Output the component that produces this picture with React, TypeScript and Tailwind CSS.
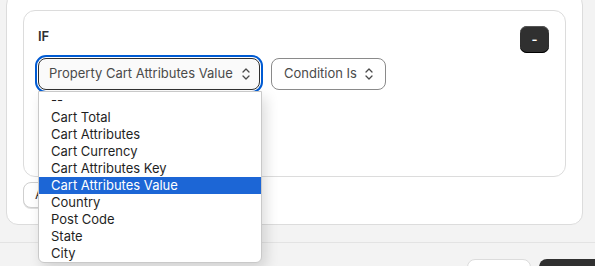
import React from 'react';

const options = [
  '--',
  'Cart Total',
  'Cart Attributes',
  'Cart Currency',
  'Cart Attributes Key',
  'Cart Attributes Value',
  'Country',
  'Post Code',
  'State',
  'City',
];

function UpDown() {
  return (
    <svg width="10" height="14" viewBox="0 0 10 14" fill="none" className="shrink-0">
      <path d="M2 5 L5 2 L8 5" stroke="#4a4a4a" strokeWidth="1.3" strokeLinecap="round" strokeLinejoin="round" />
      <path d="M2 9 L5 12 L8 9" stroke="#4a4a4a" strokeWidth="1.3" strokeLinecap="round" strokeLinejoin="round" />
    </svg>
  );
}

export default function App() {
  const selected = 'Cart Attributes Value';

  return (
    <div
      className="relative w-[595px] h-[266px] overflow-hidden bg-[#f3f3f3] text-[13px] text-[#303030]"
      style={{ fontFamily: 'Inter, "Liberation Sans", sans-serif' }}
    >
      {/* Outer card */}
      <div className="mx-[6px] -mt-[7px] w-[577px] rounded-[12px] border border-[#dcdcdc] bg-white p-4">
        {/* Condition block */}
        <div className="h-[167px] rounded-[12px] border border-[#dcdcdc] bg-white pl-[14px] pr-4 pt-[15px]">
          <div className="flex items-start justify-between">
            <span className="leading-[20px] font-semibold text-[#303030]">IF</span>
            <button className="flex h-[27px] w-[29px] items-center justify-center rounded-[7px] bg-[#303030] font-semibold text-white shadow-[inset_0_-1px_0_#000,inset_0_1px_0_#555]">
              -
            </button>
          </div>
          <div className="mt-[5px] flex items-center gap-[11px]">
            <div className="flex h-[32px] w-[222px] items-center justify-between rounded-[8px] border border-[#303030] bg-[#fafafa] pl-[10px] pr-[8px] outline-2 outline-offset-1 outline-[#005bd3]">
              <span className="text-[#4a4a4a]">Property Cart Attributes Value</span>
              <UpDown />
            </div>
            <div className="flex h-[32px] items-center gap-[7px] rounded-[8px] border border-[#8a8a8a] bg-white pl-[12px] pr-[11px]">
              <span className="text-[#4a4a4a]">Condition Is</span>
              <UpDown />
            </div>
          </div>
        </div>
        <button className="mt-[5px] flex h-[26px] items-center rounded-[8px] border border-[#cfcfcf] bg-white px-[11px] text-[#303030] shadow-[0_1px_0_#e0e0e0]">
          Add condition
        </button>
      </div>

      {/* Footer */}
      <div className="mt-[17px] flex justify-end gap-2 border-t border-[#e3e3e3] pt-4 -mr-[14px]">
        <button className="h-[28px] w-[64px] rounded-[8px] border border-[#dcdcdc] bg-white">Cancel</button>
        <button className="h-[28px] w-[70px] rounded-[8px] bg-[#303030] font-semibold text-white">Save</button>
      </div>

      {/* Open dropdown */}
      <ul className="absolute left-[38px] top-[91px] w-[224px] rounded-b-[6px] border border-[#c9c9c9] bg-white shadow-[4px_6px_14px_rgba(0,0,0,0.14)]">
        {options.map((o) => (
          <li
            key={o}
            className={`h-[17px] pl-[12px] leading-[17px] ${
              o === selected ? 'bg-[#1c66d6] text-white' : 'text-[#1f1f1f]'
            }`}
          >
            {o}
          </li>
        ))}
      </ul>
    </div>
  );
}
